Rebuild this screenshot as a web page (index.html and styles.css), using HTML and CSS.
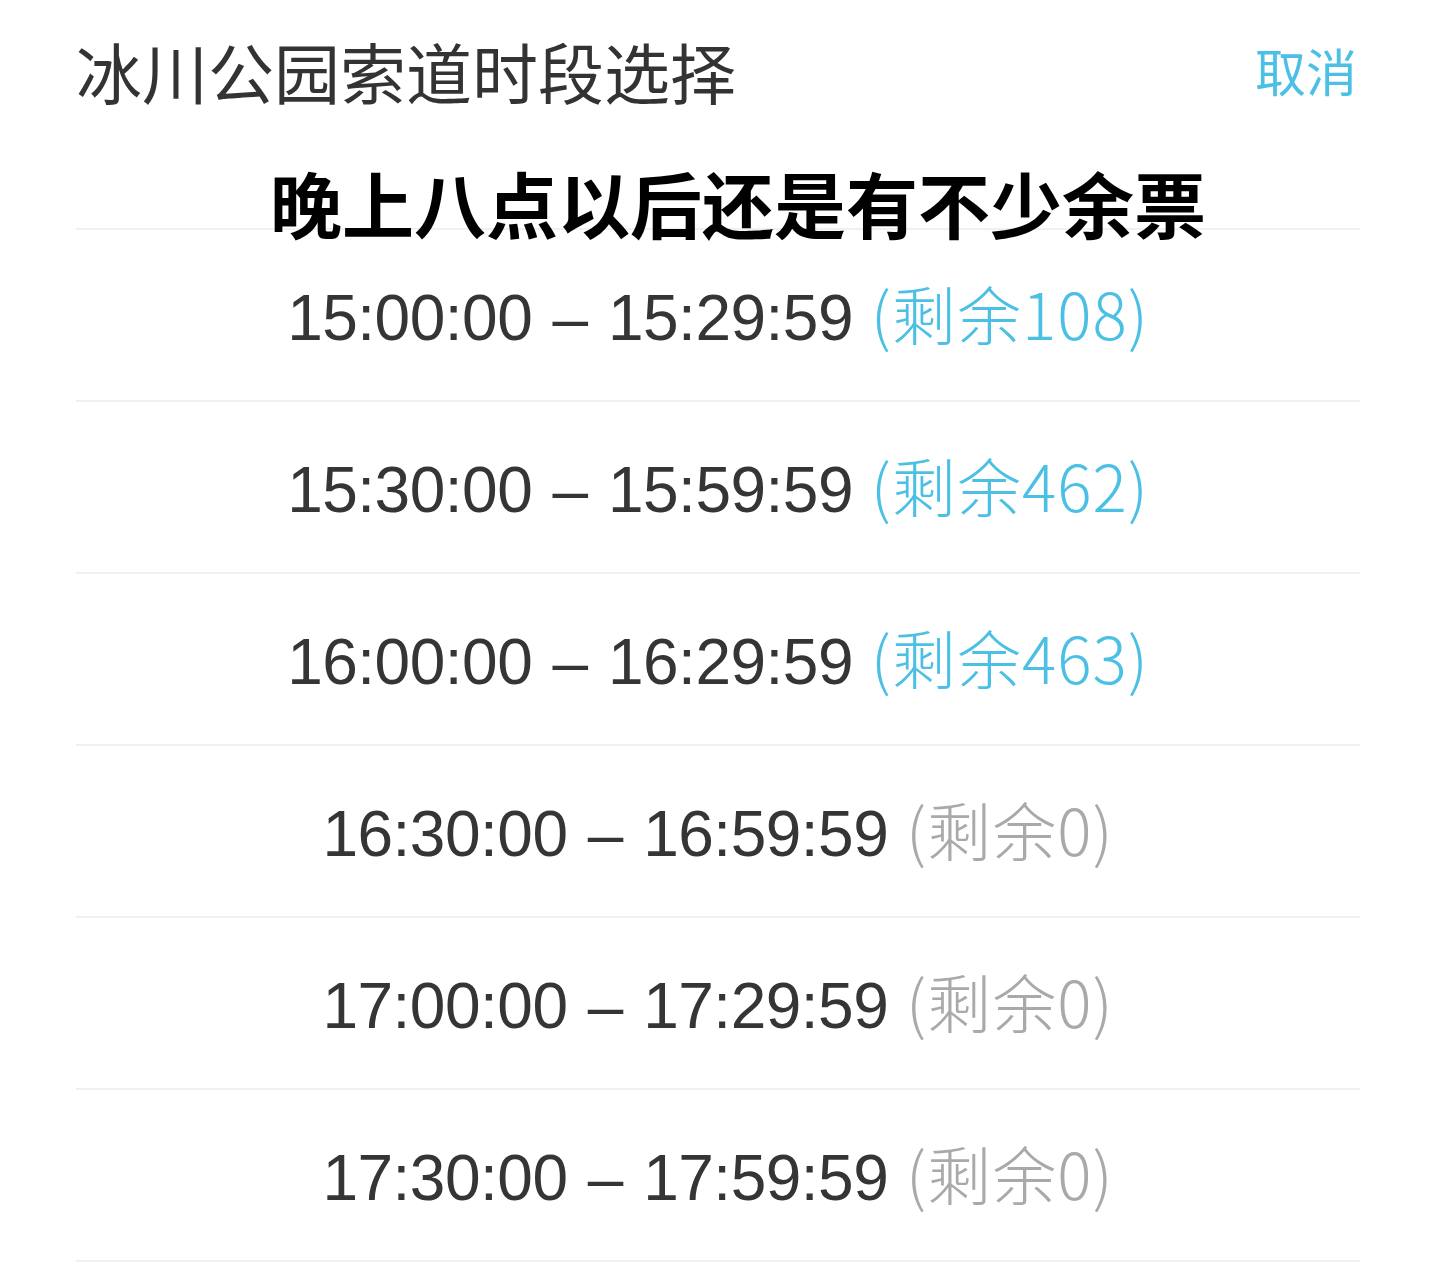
FILE: index.html
```html
<!DOCTYPE html>
<html lang="zh-CN">
<head>
<meta charset="utf-8">
<title>冰川公园索道时段选择</title>
<link rel="stylesheet" href="styles.css">
</head>
<body>
<div class="sheet">
  <header class="header">
    <h1 class="title">冰川公园索道时段选择</h1>
    <button class="cancel" type="button">取消</button>
  </header>
  <div class="caption">晚上八点以后还是有不少余票</div>
  <ul class="slots">
    <li class="slot"><span class="time">15:00:00 – 15:29:59</span> <span class="left avail">(剩余108)</span></li>
    <li class="slot"><span class="time">15:30:00 – 15:59:59</span> <span class="left avail">(剩余462)</span></li>
    <li class="slot"><span class="time">16:00:00 – 16:29:59</span> <span class="left avail">(剩余463)</span></li>
    <li class="slot"><span class="time">16:30:00 – 16:59:59</span> <span class="left none">(剩余0)</span></li>
    <li class="slot"><span class="time">17:00:00 – 17:29:59</span> <span class="left none">(剩余0)</span></li>
    <li class="slot"><span class="time">17:30:00 – 17:59:59</span> <span class="left none">(剩余0)</span></li>
  </ul>
</div>
</body>
</html>
```
FILE: styles.css
```css
html, body {
  margin: 0;
  padding: 0;
  background: #ffffff;
}

.sheet {
  position: relative;
  width: 1437px;
  height: 1280px;
  overflow: hidden;
  font-family: "Liberation Sans", "Noto Sans CJK SC", sans-serif;
}

.header {
  height: 228px;
  box-sizing: border-box;
  display: flex;
  align-items: flex-start;
  justify-content: space-between;
  padding: 35px 80px 0 76px;
}

.title {
  margin: 0;
  font-family: "Noto Sans CJK SC", sans-serif;
  font-weight: 400;
  font-size: 66px;
  line-height: 70px;
  color: #333333;
}

.cancel {
  margin: 0;
  padding: 0;
  border: 0;
  background: none;
  font-family: "Noto Sans CJK SC", sans-serif;
  font-weight: 400;
  font-size: 51px;
  line-height: 70px;
  color: #4cc0e4;
}

.caption {
  position: absolute;
  left: 270px;
  top: 162px;
  font-family: "Noto Sans CJK SC", sans-serif;
  font-weight: 700;
  font-size: 72px;
  line-height: 80px;
  color: #000000;
  white-space: nowrap;
}

.slots {
  list-style: none;
  margin: 0 77px 0 76px;
  padding: 0;
  border-top: 2px solid #f0f0f0;
}

.slot {
  height: 170px;
  border-bottom: 2px solid #f0f0f0;
  text-align: center;
  white-space: pre;
  font-family: "Liberation Sans", sans-serif;
  font-size: 64px;
  line-height: 164px;
  color: #353535;
}

.time {
  word-spacing: 3px;
  letter-spacing: -0.5px;
}

.left {
  font-family: "Noto Sans CJK SC", sans-serif;
  font-weight: 300;
  letter-spacing: 1px;
}

.avail {
  color: #4cc0e4;
}

.none {
  color: #a9a9a9;
}
```
